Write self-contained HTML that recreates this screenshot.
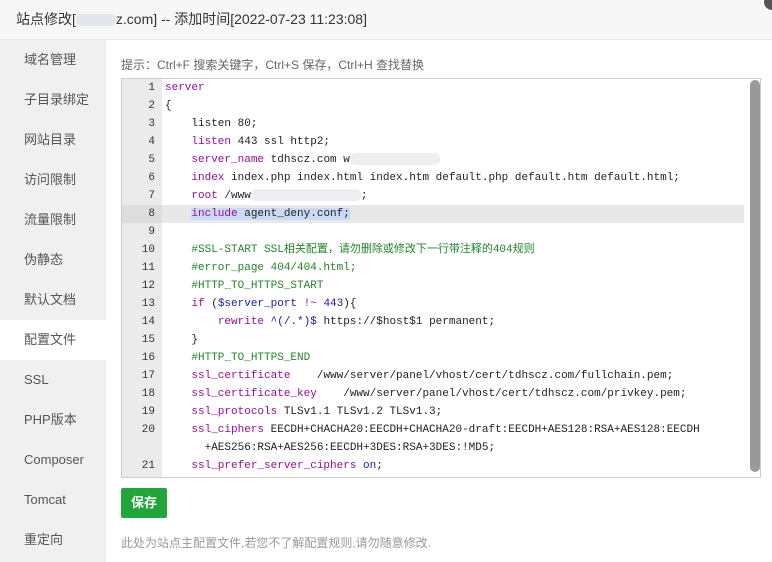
<!DOCTYPE html>
<html><head><meta charset="utf-8"><style>
*{margin:0;padding:0;box-sizing:border-box}
body{width:772px;height:562px;background:#fff;font-family:"Liberation Sans","Noto Sans CJK SC",sans-serif;position:relative;overflow:hidden}
.hd{position:absolute;left:0;top:0;width:772px;height:40px;background:#f7f7f7;border-bottom:1px solid #e8e8e8;font-size:14px;color:#333;line-height:38px;padding-left:16px}
.close{position:absolute;left:762px;top:-8px;width:20px;height:20px;border-radius:50%;background:#555;border:2px solid #fff}
.sb{position:absolute;left:0;top:40px;width:106px;height:522px;background:#f0f0f0}
.sb div{height:40px;line-height:40px;padding-left:24px;font-size:13px;color:#555}
.sb .on{background:#fff}
.tip{position:absolute;left:121px;top:56px;font-size:12px;color:#666}
.ed{position:absolute;left:121px;top:78px;width:640px;height:400px;border:1px solid #ccc;overflow:hidden;background:#fff}
.gut{position:absolute;left:0;top:0;width:40px;height:100%;background:#ebebeb}
.ln{position:absolute;left:0;width:33px;text-align:right;font:11px/18px "Liberation Mono",monospace;color:#333}
.cd{position:absolute;left:43px;font:11px/18px "Liberation Mono","Noto Sans CJK SC",monospace;color:#222;white-space:pre}
.k{color:#990c99}.v{color:#1a1aa6}.c{color:#22862a}
.sel{position:absolute;left:0;top:126px;width:622px;height:18px;background:#e8e8e8}
.selt{background:#c8daf5}
.scr{position:absolute;left:628px;top:1px;width:10px;height:392px;background:#999;border-radius:5px}
.btn{position:absolute;left:121px;top:488px;width:46px;height:30px;background:#20a53a;border-radius:2px;color:#fff;font-size:13px;font-weight:bold;text-align:center;line-height:30px}
.ft{position:absolute;left:121px;top:534px;font-size:12px;color:#999}
.blur{display:inline-block;background:#eceef1;height:12px;vertical-align:middle;border-radius:5px}
</style></head><body>
<div class="hd">站点修改[<span class="blur" style="width:40px;background:#e4e6ee"></span>z.com] -- 添加时间[2022-07-23 11:23:08]</div>
<div class="close"></div>
<div class="sb">
<div>域名管理</div><div>子目录绑定</div><div>网站目录</div><div>访问限制</div><div>流量限制</div><div>伪静态</div><div>默认文档</div><div class="on">配置文件</div><div>SSL</div><div>PHP版本</div><div>Composer</div><div>Tomcat</div><div>重定向</div>
</div>
<div class="tip">提示：Ctrl+F 搜索关键字，Ctrl+S 保存，Ctrl+H 查找替换</div>
<div class="ed">
<div class="sel"></div>
<div class="gut"></div>
<div class="ln" style="top:0">1</div><div class="ln" style="top:18px">2</div><div class="ln" style="top:36px">3</div><div class="ln" style="top:54px">4</div><div class="ln" style="top:72px">5</div><div class="ln" style="top:90px">6</div><div class="ln" style="top:108px">7</div><div class="ln" style="top:126px;background:#ddd;left:0;width:40px;padding-right:7px">8</div><div class="ln" style="top:144px">9</div><div class="ln" style="top:162px">10</div><div class="ln" style="top:180px">11</div><div class="ln" style="top:198px">12</div><div class="ln" style="top:216px">13</div><div class="ln" style="top:234px">14</div><div class="ln" style="top:252px">15</div><div class="ln" style="top:270px">16</div><div class="ln" style="top:288px">17</div><div class="ln" style="top:306px">18</div><div class="ln" style="top:324px">19</div><div class="ln" style="top:342px">20</div><div class="ln" style="top:378px">21</div>
<div class="cd" style="top:0"><span class="k">server</span>
{
    listen 80;
    <span class="k">listen</span> 443 ssl http2;
    <span class="k">server_name</span> tdhscz.com w<span class="blur" style="width:90px"></span>
    <span class="k">index</span> index.php index.html index.htm default.php default.htm default.html;
    <span class="k">root</span> /www<span class="blur" style="width:110px"></span>;
    <span class="selt"><span class="k">include</span> agent_deny.conf;</span>

    <span class="c">#SSL-START SSL相关配置，请勿删除或修改下一行带注释的404规则</span>
    <span class="c">#error_page 404/404.html;</span>
    <span class="c">#HTTP_TO_HTTPS_START</span>
    <span class="k">if</span> (<span class="v">$server_port</span> <span class="k">!~</span> <span class="v">443</span>){
        <span class="k">rewrite</span> <span class="v">^(/.*)$</span> https://$host$1 permanent;
    }
    <span class="c">#HTTP_TO_HTTPS_END</span>
    <span class="k">ssl_certificate</span>    /www/server/panel/vhost/cert/tdhscz.com/fullchain.pem;
    <span class="k">ssl_certificate_key</span>    /www/server/panel/vhost/cert/tdhscz.com/privkey.pem;
    <span class="k">ssl_protocols</span> TLSv1.1 TLSv1.2 TLSv1.3;
    <span class="k">ssl_ciphers</span> EECDH+CHACHA20:EECDH+CHACHA20-draft:EECDH+AES128:RSA+AES128:EECDH
      +AES256:RSA+AES256:EECDH+3DES:RSA+3DES:!MD5;
    <span class="k">ssl_prefer_server_ciphers</span> <span class="v">on</span>;</div>
<div class="scr"></div>
</div>
<div class="btn">保存</div>
<div class="ft">此处为站点主配置文件,若您不了解配置规则,请勿随意修改.</div>
</body></html>
